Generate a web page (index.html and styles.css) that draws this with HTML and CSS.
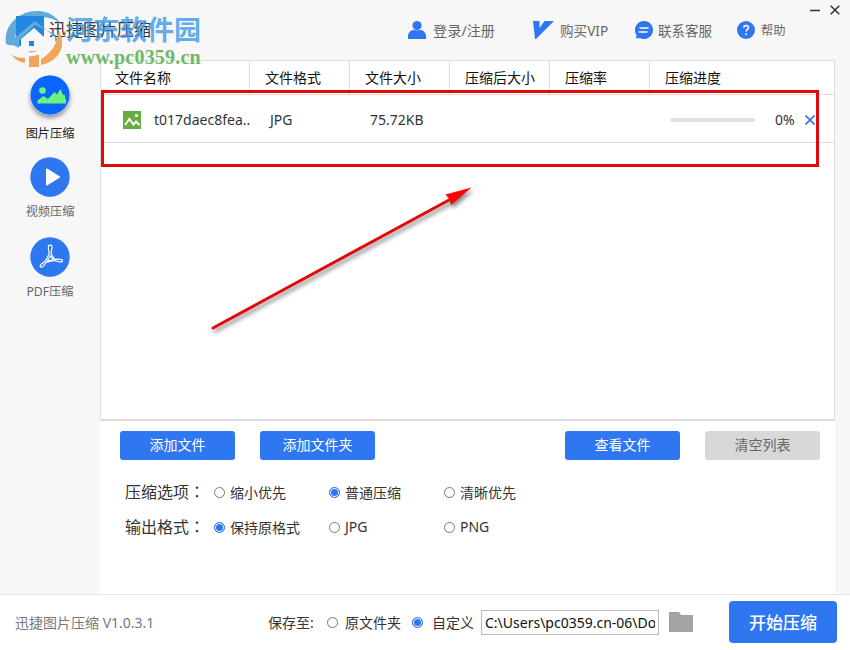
FILE: index.html
```
<!DOCTYPE html>
<html lang="zh-CN">
<head>
<meta charset="UTF-8">
<meta name="viewport" content="width=device-width, initial-scale=1.0">
<title>迅捷图片压缩</title>
<link rel="stylesheet" href="styles.css">
</head>
<body>
<div class="window">
    <header class="titlebar">
        <h1 class="app-title">迅捷图片压缩</h1>
        <nav class="top-nav">
            <a class="nav-item nav-login">
                <svg width="18" height="18" viewBox="0 0 18 18"><circle cx="9" cy="4.6" r="4.6"/><path d="M0 18v-3c0-4 3.500-6 6-6.300c1.500 1 4.500 1 6 0c2.500.3 6 2.300 6 6.300v3z"/></svg>
                <span>登录/注册</span>
            </a>
            <a class="nav-item nav-vip">
                <svg width="21" height="18" viewBox="0 0 21 18"><path d="M0 0h6.500v7L11.500 0H21L3 18H2z"/></svg>
                <span>购买VIP</span>
            </a>
            <a class="nav-item nav-service">
                <svg width="18" height="18" viewBox="0 0 18 18"><path d="M9 0a9 9 0 1 1-3.500 17.300L1 17.300l.5-3.300A9 9 0 0 1 9 0z"/><path class="line" d="M4.500 7h9M3.500 11h9"/></svg>
                <span>联系客服</span>
            </a>
            <a class="nav-item nav-help">
                <svg width="18" height="18" viewBox="0 0 18 18"><circle cx="9" cy="9" r="9"/><path class="line" d="M6.800 6.800c0-3 4.600-3 4.600-.2c0 1.700-2.300 1.900-2.300 4M9.100 12.200v1.800"/></svg>
                <span>帮助</span>
            </a>
        </nav>
        <div class="window-buttons">
            <svg width="10" height="10" viewBox="0 0 10 10"><path d="M0 5.500h10"/></svg>
            <svg width="10" height="10" viewBox="0 0 10 10"><path d="M.7.700l8.600 8.600M9.300.700L.7 9.300"/></svg>
        </div>
    </header>

    <div class="content">
        <aside class="sidebar">
            <a class="side-item active">
                <svg width="40" height="40" viewBox="0 0 40 40"><circle class="disc" cx="20" cy="20" r="19.700"/><g class="green"><circle cx="12.500" cy="15.500" r="3.300"/><path d="M7.500 28.500v-3l6-4.500l4.500 3l6.500-7l2.500 2.500l3.500-5.500l2.500 6l1.500-.5l1.500 6v3z"/></g></svg>
                <span>图片压缩</span>
            </a>
            <a class="side-item">
                <svg width="40" height="40" viewBox="0 0 40 40"><circle class="disc" cx="20" cy="20" r="19.700"/><path class="play" d="M17 12.500l12 7.500l-12 7.500z"/></svg>
                <span>视频压缩</span>
            </a>
            <a class="side-item pdf">
                <svg width="40" height="40" viewBox="0 0 40 40"><circle class="disc" cx="20" cy="20" r="19.700"/><path class="acrobat" d="M19 8.300c2.500-.6 3.300.3 3 2.200l-.9 5.500c.8 2.800 2.200 5 4.100 6.400c3.500-.4 7 0 7.300 1.300c.2 1.900-4.300 1.400-7.500-.2c-3.300.2-6.500 1.100-9.300 2.300c-1.600 2.900-3.700 5.100-5.100 4.200c-1.200-1.200.8-3.200 4-5.200c2.200-2.700 3.600-5.600 4.700-8.800c-.9-3.400-1.500-6.900-.3-7.700zM20.300 18.800l-3 5.200l6.300-1.200z"/></svg>
                <span>PDF压缩</span>
            </a>
        </aside>

        <main class="main">
            <section class="file-list">
                <div class="list-grid list-head">
                    <span>文件名称</span>
                    <span>文件格式</span>
                    <span>文件大小</span>
                    <span>压缩后大小</span>
                    <span>压缩率</span>
                    <span>压缩进度</span>
                </div>
                <div class="list-grid list-row">
                    <span class="file-name">
                        <svg width="18" height="18" viewBox="0 0 18 18"><path class="tile" d="M0 0h18v18H0z"/><path class="hill" d="M2 14l4.500-6l4 5.500l2.500-3l3.500 3.500"/><circle cx="13.500" cy="4.500" r="1.600"/></svg>
                        <span>t017daec8fea..</span>
                    </span>
                    <span>JPG</span>
                    <span>75.72KB</span>
                    <span></span>
                    <span></span>
                    <span class="progress-cell">
                        <i class="progress"></i>
                        <b>0%</b>
                        <svg width="10" height="10" viewBox="0 0 10 10"><path d="M.5.500l9 9M9.500.500l-9 9"/></svg>
                    </span>
                </div>
            </section>

            <div class="actions">
                <button class="btn">添加文件</button>
                <button class="btn">添加文件夹</button>
                <button class="btn btn-view">查看文件</button>
                <button class="btn btn-gray">清空列表</button>
            </div>

            <div class="options">
                <div class="option-row">
                    <span class="option-label">压缩选项<em lang="zh-TW">：</em></span>
                    <label><i class="radio"></i><span>缩小优先</span></label>
                    <label><i class="radio checked"></i><span>普通压缩</span></label>
                    <label><i class="radio"></i><span>清晰优先</span></label>
                </div>
                <div class="option-row">
                    <span class="option-label">输出格式<em lang="zh-TW">：</em></span>
                    <label><i class="radio checked"></i><span>保持原格式</span></label>
                    <label><i class="radio"></i><span>JPG</span></label>
                    <label><i class="radio"></i><span>PNG</span></label>
                </div>
            </div>
        </main>
    </div>

    <footer class="footer">
        <span class="version">迅捷图片压缩 V1.0.3.1</span>
        <span class="save-label">保存至:</span>
        <label class="save-origin"><i class="radio"></i><span>原文件夹</span></label>
        <label class="save-custom"><i class="radio checked"></i><span>自定义</span></label>
        <input class="path-box" type="text" value="C:\Users\pc0359.cn-06\Do" readonly>
        <svg class="folder" width="24" height="20" viewBox="0 0 24 20"><path d="M0 0h10l2 3h12v17H0z"/></svg>
        <button class="start-btn">开始压缩</button>
    </footer>

    <!-- site watermark -->
    <div class="watermark">
        <svg width="60" height="60" viewBox="0 0 60 60">
            <path class="wm-blue" d="M1 34C-2 14 16 0 33 1c10 0 18 5 22 12C43 4 24 5 15 17c-6 8-6 14-3 19c-4-1-7 0-11-2z"/>
            <path class="wm-tile" d="M11 6h28v30H11z"/>
            <path class="wm-blue" d="M8 29L30 11l24 19l-4 2v-8l-20-9L14 30v8l-6-3z"/>
            <path class="wm-white" d="M16 29l13-11l10 9v13H29v-9h-5v9l-8-1z"/>
            <path class="wm-orange" d="M54 21c8 15 0 30-18 34v-6c10-6 16-14 18-28zM24 41h10v16H24zM6 44c4 6 9 8 14 9v-5c-6 0-10-1-14-4z"/>
            <path class="wm-white" d="M3 38c14 8 34 6 49-8c-10 16-31 23-49 8z"/>
        </svg>
        <div class="wm-text">
            <span class="wm-name">河东软件园</span>
            <span class="wm-url">www.pc0359.cn</span>
        </div>
    </div>

    <!-- tutorial marks -->
    <div class="mark-box"></div>
    <svg class="mark-arrow" width="290" height="170" viewBox="0 0 290 170">
        <path class="shaft" d="M13 158L250 29.500"/>
        <path class="tip" d="M271.500 17.500L245.500 24.500L249.500 29L251 35z"/>
    </svg>
</div>
</body>
</html>
```
FILE: styles.css
```
* {
    box-sizing: border-box;
}
body {
    margin: 0;
    font-family: "Noto Sans", "Noto Sans CJK SC", sans-serif;
    font-size: 14px;
    color: #333;
}
svg {
    display: block;
    flex: none;
}
button {
    border: none;
    padding: 0;
    font-family: inherit;
}
.window {
    position: relative;
    display: flex;
    flex-direction: column;
    width: 850px;
    height: 650px;
    overflow: hidden;
    background: #f7f7f7;
}

/* title bar */
.titlebar {
    display: flex;
    height: 60px;
    flex: none;
}
.app-title {
    margin: 0;
    padding-left: 49px;
    width: 408px;
    font-size: 17px;
    font-weight: normal;
    line-height: 59px;
    color: #333;
}
.top-nav {
    display: flex;
    align-items: center;
    width: 402px;
}
.nav-item {
    display: flex;
    align-items: center;
    white-space: nowrap;
    color: #666;
}
.nav-item svg {
    fill: #2f77f1;
}
.nav-item .line {
    fill: none;
    stroke: #fff;
    stroke-width: 1.6;
}
.nav-login {
    gap: 7px;
    width: 125px;
    font-size: 14.2px;
}
.nav-vip {
    gap: 6px;
    width: 102px;
    font-size: 13.6px;
}
.nav-service {
    gap: 5px;
    width: 102px;
    font-size: 13.5px;
}
.nav-help {
    gap: 6px;
    font-size: 12.3px;
}
.window-buttons {
    display: flex;
    gap: 10px;
    padding-top: 5px;
}
.window-buttons svg {
    fill: none;
    stroke: #333;
    stroke-width: 1.5;
}

.content {
    display: flex;
    height: 534px;
    flex: none;
}

/* sidebar */
.sidebar {
    width: 100px;
    padding-top: 15px;
}
.side-item {
    display: flex;
    flex-direction: column;
    align-items: center;
    height: 82px;
    font-size: 12.2px;
    line-height: 18px;
    color: #666;
}
.side-item span {
    margin-top: 6px;
}
.side-item .disc {
    fill: #2f77f1;
}
.side-item.active {
    color: #222;
}
.side-item.active span {
    margin-top: 10px;
}
.side-item.active svg {
    border-radius: 50%;
    box-shadow: 0 3px 4px rgba(0, 0, 0, 0.4);
}
.side-item.active .disc {
    fill: #0a66ff;
}
.side-item .green {
    fill: #6df27c;
}
.side-item .play {
    fill: #fff;
    stroke: #fff;
    stroke-width: 2;
    stroke-linejoin: round;
}
.side-item .acrobat {
    fill: none;
    stroke: #fff;
    stroke-width: 1.2;
}
.side-item.pdf {
    margin-top: -2px;
}

/* file list */
.main {
    width: 735px;
    background: #fff;
}
.file-list {
    height: 361px;
    border: 1px solid #ddd;
    border-bottom-width: 2px;
}
.list-grid {
    display: grid;
    grid-template-columns: 149px 100px 100px 100px 100px 1fr;
    border-bottom: 1px solid #ddd;
}
.list-head {
    height: 34px;
    line-height: 34px;
    color: #111;
}
.list-head span {
    padding-left: 14px;
    border-right: 1px solid #ddd;
}
.list-head span + span {
    padding-left: 15px;
}
.list-head span:last-child {
    border-right: none;
}
.list-row {
    height: 48px;
    line-height: 49px;
}
.list-row > span {
    padding-left: 20px;
    white-space: nowrap;
}
.list-row .file-name {
    display: flex;
    align-items: center;
    gap: 13px;
    padding-left: 22px;
}
.file-name .tile {
    fill: #66ac3e;
}
.file-name circle {
    fill: #fff;
}
.file-name .hill {
    fill: none;
    stroke: #fff;
    stroke-width: 2;
}
.progress-cell {
    display: flex;
    align-items: center;
}
.progress {
    width: 85px;
    height: 4px;
    border-radius: 2px;
    background: #e0e0e0;
}
.progress-cell b {
    width: 30px;
    margin-left: 20px;
    font-weight: normal;
}
.progress-cell svg {
    fill: none;
    stroke: #3a78dc;
    stroke-width: 1.7;
}

/* buttons */
.actions {
    display: flex;
    gap: 25px;
    padding: 10px 15px 0 20px;
}
.btn {
    width: 115px;
    height: 29px;
    padding-bottom: 2px;
    border-radius: 3px;
    background: #2f77f1;
    color: #fff;
    font-size: 14px;
    line-height: 27px;
}
.btn-view {
    margin-left: auto;
}
.btn-gray {
    background: #d8d8d8;
    color: #666;
}

/* options */
.options {
    padding: 15px 0 0 25px;
}
.option-row {
    display: flex;
    align-items: center;
    height: 35px;
}
.option-label {
    width: 89px;
    padding-bottom: 3px;
    font-size: 16px;
    white-space: nowrap;
}
.option-label em {
    font-family: "Noto Sans CJK TC", sans-serif;
    font-style: normal;
}
.option-row label {
    display: flex;
    align-items: center;
    gap: 5px;
    width: 115px;
}
.option-row label span {
    padding-bottom: 2px;
}
.radio {
    display: block;
    flex: none;
    width: 11px;
    height: 11px;
    border: 1px solid #777;
    border-radius: 50%;
    background: #fff;
}
.radio.checked {
    border-color: #2f77f1;
    background: #2f77f1;
    box-shadow: inset 0 0 0 1px #fff;
}

/* footer */
.footer {
    display: flex;
    align-items: center;
    height: 56px;
    flex: none;
    padding-left: 15px;
    border-top: 1px solid #e5e5e5;
    background: #fff;
}
.footer label {
    display: flex;
    align-items: center;
}
.footer span {
    padding-bottom: 2px;
}
.version {
    width: 253px;
    color: #777;
}
.save-label {
    width: 59px;
}
.save-origin {
    gap: 7px;
    width: 85px;
}
.save-custom {
    gap: 9px;
    width: 69px;
}
.path-box {
    width: 178px;
    height: 25px;
    padding: 0 3px;
    border: 1px solid #bbb;
    background: #fff;
    font-family: inherit;
    font-size: 14px;
    color: #111;
}
.folder {
    margin: -2px 0 0 10px;
    fill: #a3a3a3;
}
.start-btn {
    width: 108px;
    height: 42px;
    margin: -2px 0 0 36px;
    border-radius: 4px;
    background: #2f77f1;
    color: #fff;
    font-size: 17px;
    font-weight: 500;
}

/* overlays */
.watermark {
    position: absolute;
    left: 5px;
    top: 10px;
    display: flex;
}
.wm-blue {
    fill: #62aadb;
}
.wm-tile {
    fill: #2487df;
}
.wm-white {
    fill: #f4f8fc;
}
.wm-orange {
    fill: #f3a45b;
}
.wm-text {
    display: flex;
    flex-direction: column;
    padding: 3px 0 0 1px;
}
.wm-name {
    height: 33px;
    font-size: 27px;
    font-weight: bold;
    line-height: 33px;
    color: rgba(61, 151, 235, 0.8);
}
.wm-url {
    font-family: "Liberation Serif", serif;
    font-size: 20px;
    font-weight: bold;
    letter-spacing: 0.2px;
    line-height: 22px;
    color: #70b867;
}
.mark-box {
    position: absolute;
    left: 101px;
    top: 90px;
    width: 718px;
    height: 77px;
    border: 3px solid #df0a0a;
}
.mark-arrow {
    position: absolute;
    left: 200px;
    top: 170px;
    filter: drop-shadow(2px 3px 2px rgba(0, 0, 0, 0.5));
}
.mark-arrow .shaft {
    fill: none;
    stroke: #df0a0a;
    stroke-width: 3;
    stroke-linecap: round;
}
.mark-arrow .tip {
    fill: #f00;
}
```
